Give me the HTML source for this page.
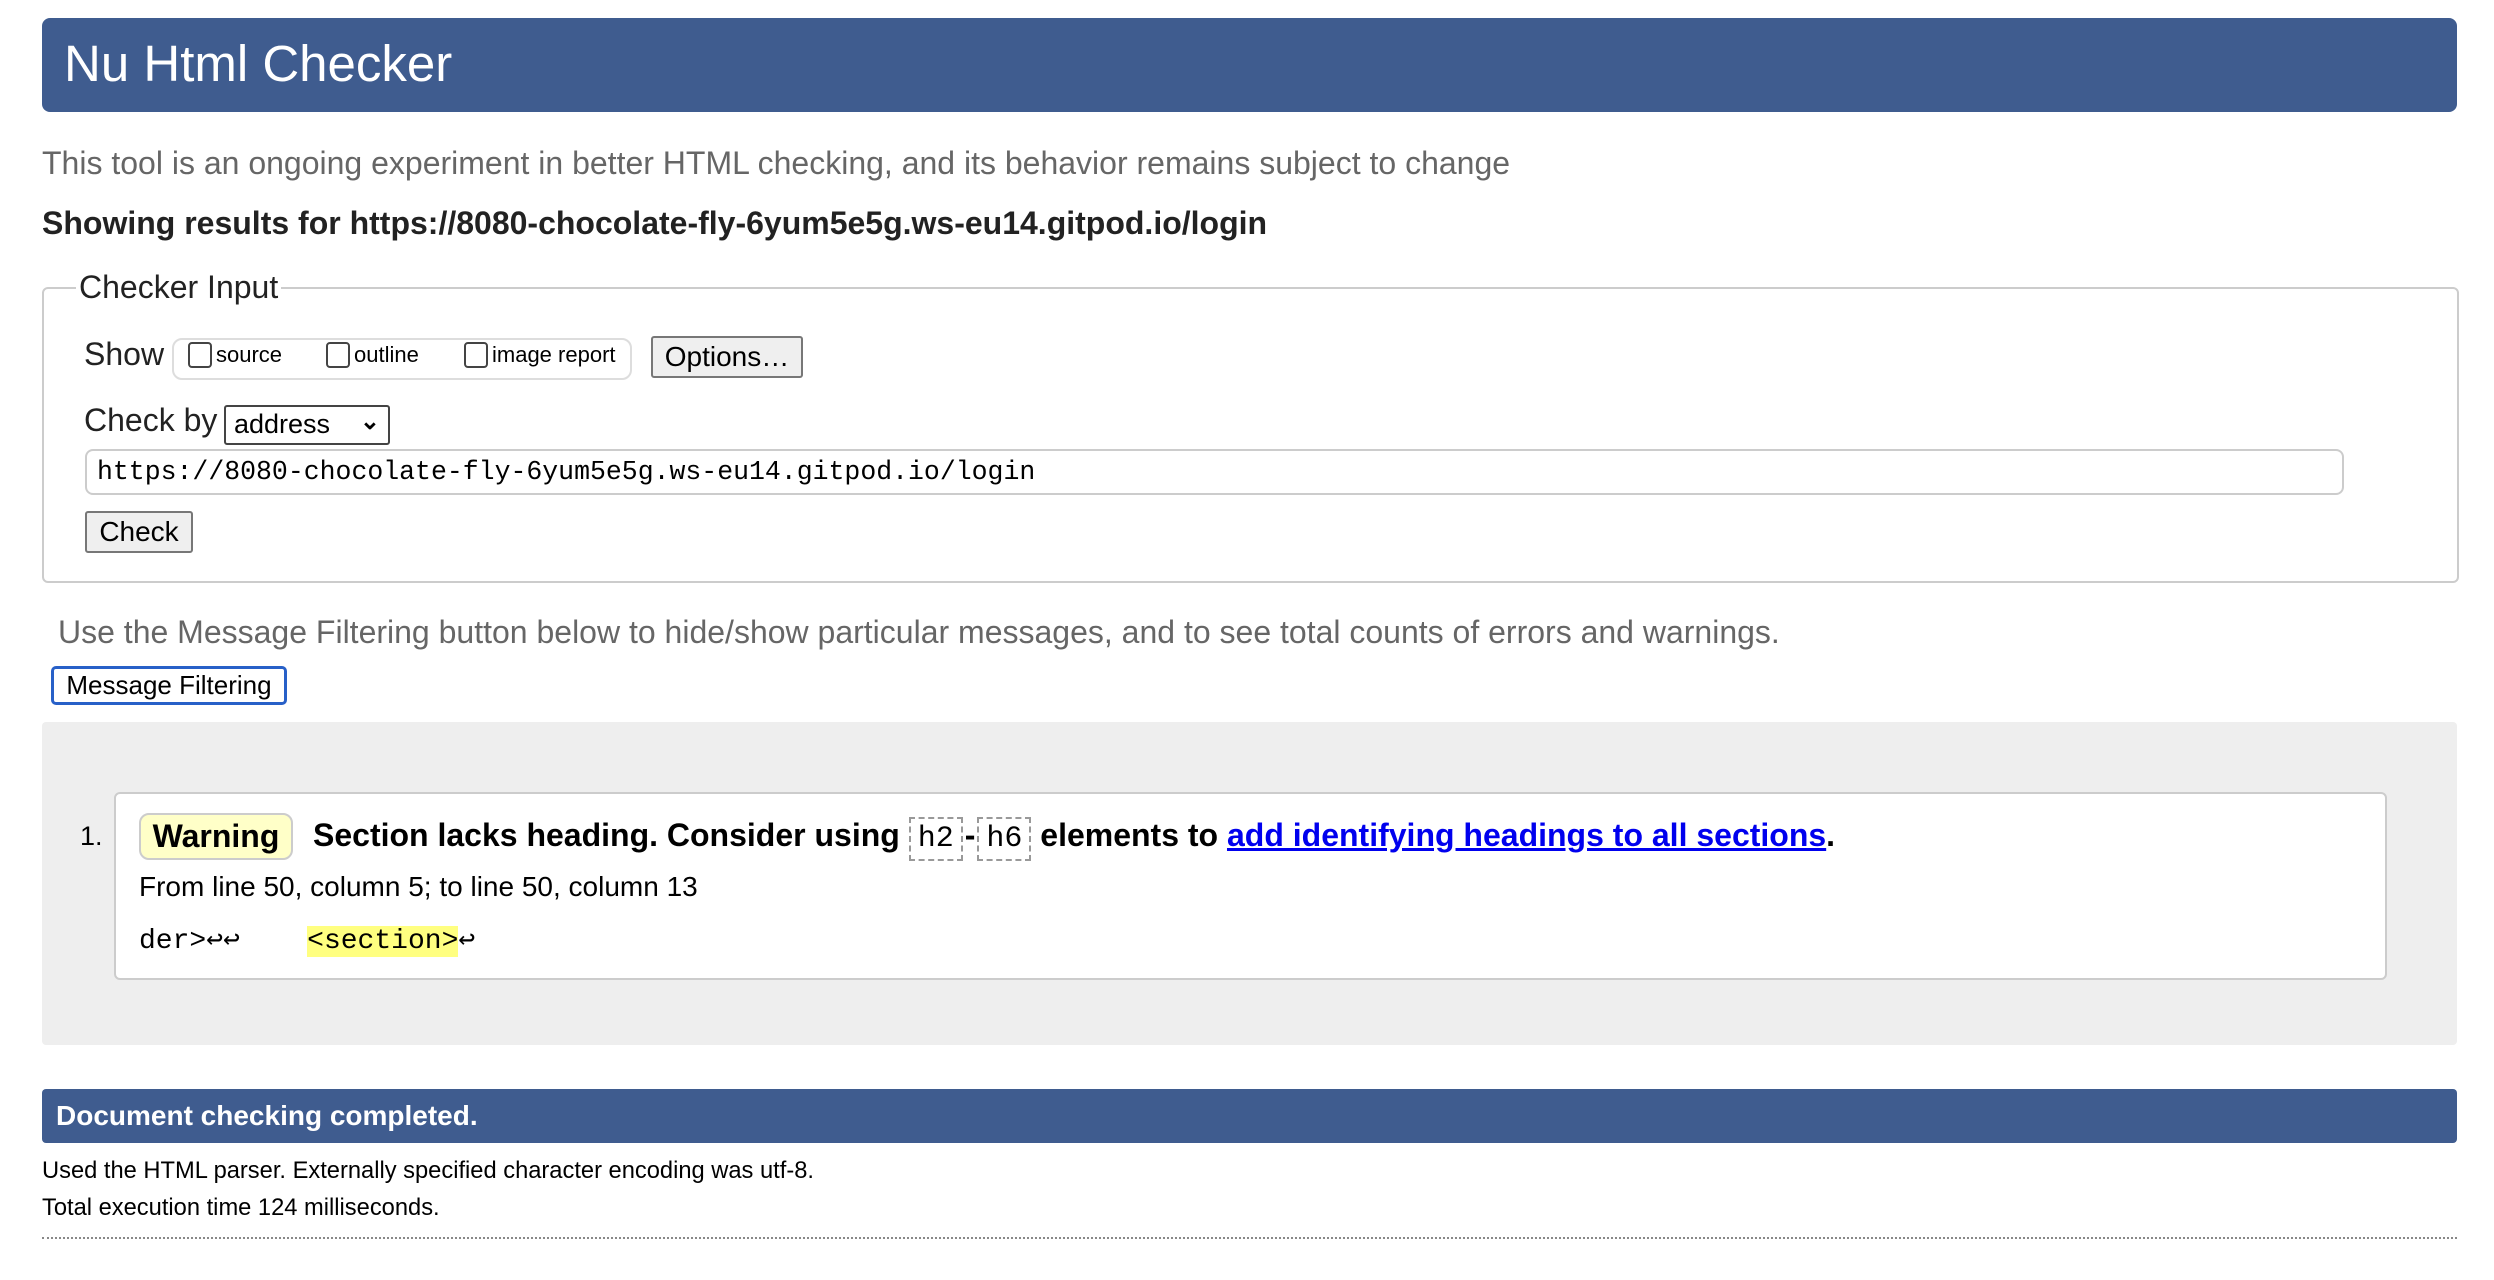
<!DOCTYPE html>
<html><head><meta charset="utf-8"><style>
body{margin:0;width:2494px;height:1280px;background:#fff;font-family:"Liberation Sans",Arial,sans-serif;position:relative;overflow:hidden;color:#000}
.abs{position:absolute;white-space:nowrap}
.hdr{left:42px;top:18px;width:2415px;height:94px;background:#3f5c8f;border-radius:8px}
.hdr span{position:absolute;left:22px;top:16px;font-size:51px;color:#fff}
.intro{left:42px;top:145px;font-size:32px;color:#666}
.show{left:42px;top:205px;font-size:32px;font-weight:bold;color:#222}
.fs{left:42px;top:287px;width:2413px;height:292px;border:2px solid #ccc;border-radius:6px}
.legend{left:76px;top:269px;font-size:32px;background:#fff;padding:0 3px;color:#222}
.lbl{font-size:32px;color:#222}
.cbgrp{left:172px;top:338px;width:456px;height:38px;border:2px solid #ddd;border-radius:10px;font-size:22px}
.cb{display:inline-block;width:20px;height:22px;border:2px solid #444;border-radius:4px;vertical-align:-6px;margin-right:4px}
.btn{border:2px solid #777;border-radius:3px;background:#efefef;font-size:28px;text-align:center}
.sel{left:224px;top:405px;width:162px;height:36px;border:2px solid #444;border-radius:3px;font-size:27px;background:#fff}
.url{left:85px;top:449px;width:2255px;height:42px;border:2px solid #ccc;border-radius:8px;font-family:"Liberation Mono",monospace;font-size:26.5px;line-height:42px}
.grey{left:42px;top:722px;width:2415px;height:323px;background:#eee;border-radius:4px}
.box{left:114px;top:792px;width:2269px;height:184px;background:#fff;border:2px solid #ccc;border-radius:6px}
.bar{left:42px;top:1089px;width:2415px;height:54px;background:#3f5c8f;border-radius:4px}
.mono{font-family:"Liberation Mono",monospace}
.code{display:inline-block;border:2px dashed #999;padding:0 7px;font-weight:normal;font-size:30px;line-height:40px;font-family:"Liberation Mono",monospace}
</style></head><body>
<div class="abs hdr"><span>Nu Html Checker</span></div>
<div class="abs intro">This tool is an ongoing experiment in better HTML checking, and its behavior remains subject to change</div>
<div class="abs show">Showing results for https://8080-chocolate-fly-6yum5e5g.ws-eu14.gitpod.io/login</div>
<div class="abs fs"></div>
<div class="abs legend">Checker Input</div>
<div class="abs lbl" style="left:84px;top:336px">Show</div>
<div class="abs cbgrp"><span style="position:absolute;left:14px;top:2px"><span class="cb"></span>source</span><span style="position:absolute;left:152px;top:2px"><span class="cb"></span>outline</span><span style="position:absolute;left:290px;top:2px"><span class="cb"></span>image report</span></div>
<div class="abs btn" style="left:651px;top:336px;width:148px;height:38px;line-height:38px">Options…</div>
<div class="abs lbl" style="left:84px;top:402px">Check by</div>
<div class="abs sel"><span style="position:absolute;left:8px;top:2px">address</span><span style="position:absolute;right:8px;top:0px;font-size:24px;font-weight:bold">⌄</span></div>
<div class="abs url"><span style="padding-left:10px">https://8080-chocolate-fly-6yum5e5g.ws-eu14.gitpod.io/login</span></div>
<div class="abs btn" style="left:85px;top:511px;width:104px;height:38px;line-height:38px">Check</div>
<div class="abs intro" style="left:58px;top:614px">Use the Message Filtering button below to hide/show particular messages, and to see total counts of errors and warnings.</div>
<div class="abs" style="left:51px;top:666px;width:230px;height:33px;border:3px solid #2860c8;border-radius:5px;font-size:26px;line-height:33px;text-align:center">Message Filtering</div>
<div class="abs grey"></div>
<div class="abs box"></div>
<div class="abs" style="left:80px;top:821px;font-size:27px">1.</div>
<div class="abs" style="left:139px;top:813px;width:150px;height:43px;background:#ffffc8;border:2px solid #ccc;border-radius:10px;font-size:32px;font-weight:bold;line-height:43px;text-align:center">Warning</div>
<div class="abs" style="left:313px;top:813px;font-size:32px;font-weight:bold;line-height:44px">Section lacks heading. Consider using <span class="code">h2</span><span style="margin:0 2px">-</span><span class="code">h6</span> elements to <span style="color:#00e;text-decoration:underline">add identifying headings to all sections</span>.</div>
<div class="abs" style="left:139px;top:871px;font-size:28px">From line 50, column 5; to line 50, column 13</div>
<div class="abs mono" style="left:139px;top:922px;font-size:28px">der>↩↩&nbsp;&nbsp;&nbsp;&nbsp;<span style="background:#ffff80">&lt;section&gt;</span>↩</div>
<div class="abs bar"><span style="position:absolute;left:14px;top:11px;font-size:28px;font-weight:bold;color:#fff">Document checking completed.</span></div>
<div class="abs" style="left:42px;top:1158px;font-size:23.7px">Used the HTML parser. Externally specified character encoding was utf-8.</div>
<div class="abs" style="left:42px;top:1195px;font-size:23.7px">Total execution time 124 milliseconds.</div>
<div class="abs" style="left:42px;top:1237px;width:2415px;border-top:2px dotted #888"></div>
</body></html>
